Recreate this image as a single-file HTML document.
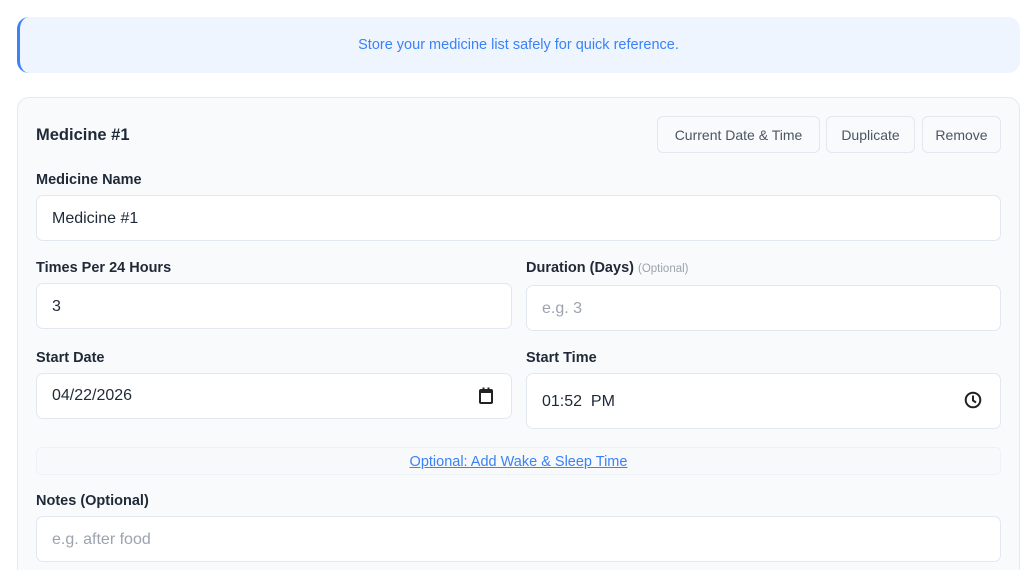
<!DOCTYPE html>
<html><head><meta charset="utf-8"><style>
*{box-sizing:border-box;margin:0;padding:0}
html,body{width:1024px;height:570px;overflow:hidden}
body{background:#fff;font-family:"Liberation Sans","DejaVu Sans",sans-serif;position:relative;color:#1f2937}
.a{position:absolute}
.banner{left:17px;top:17px;width:1003px;height:56px;background:#eef5ff;border-left:3px solid #3b82f6;border-radius:12px;color:#3b82f6;font-size:14.5px;text-align:center;line-height:56px;padding-right:3px}
.card{left:17px;top:97px;width:1003px;height:500px;background:#f8fafc;border:1px solid #e5e9f0;border-radius:12px}
.h{font-size:16.5px;font-weight:bold;color:#1f2937}
.lbl{font-size:14.5px;font-weight:bold;color:#1f2937}
.in{background:#fff;border:1px solid #e2e8f0;border-radius:7px;font-size:16px;color:#1f2937;padding-left:15px;display:flex;align-items:center}
.ph{color:#9ca3af}
.btn{top:116px;height:37px;background:#f8fafc;border:1px solid #e2e8f0;border-radius:6px;font-size:14px;color:#4b5563;display:flex;align-items:center;justify-content:center}
</style></head><body>
<div class="a banner">Store your medicine list safely for quick reference.</div>
<div class="a card"></div>
<div class="a h" style="left:36px;top:126px">Medicine #1</div>
<div class="a btn" style="left:657px;width:163px">Current Date &amp; Time</div>
<div class="a btn" style="left:826px;width:89px">Duplicate</div>
<div class="a btn" style="left:922px;width:79px">Remove</div>
<div class="a lbl" style="left:36px;top:172px">Medicine Name</div>
<div class="a in" style="left:36px;top:195px;width:965px;height:46px;padding-top:2px">Medicine #1</div>
<div class="a lbl" style="left:36px;top:260px">Times Per 24 Hours</div>
<div class="a in" style="left:36px;top:283px;width:476px;height:46px;padding-top:2px">3</div>
<div class="a lbl" style="left:526px;top:260px">Duration (Days) <span style="font-weight:normal;font-size:11.5px;color:#9ca3af">(Optional)</span></div>
<div class="a in" style="left:526px;top:285px;width:475px;height:46px;padding-top:2px"><span class="ph">e.g. 3</span></div>
<div class="a lbl" style="left:36px;top:350px">Start Date</div>
<div class="a in" style="left:36px;top:373px;width:476px;height:46px">04/22/2026
<svg class="a" style="left:441px;top:13px" width="16" height="18" viewBox="0 0 16 18"><rect x="2" y="3" width="12" height="13" rx="1" fill="none" stroke="#222" stroke-width="2"/><rect x="2" y="3" width="12" height="3" fill="#222"/><rect x="4.5" y="0.5" width="2" height="3" fill="#222"/><rect x="9.5" y="0.5" width="2" height="3" fill="#222"/></svg></div>
<div class="a lbl" style="left:526px;top:350px">Start Time</div>
<div class="a in" style="left:526px;top:373px;width:475px;height:56px;padding-top:2px">01:52&nbsp; PM
<svg class="a" style="left:436px;top:16px" width="20" height="20" viewBox="0 0 20 20"><circle cx="10" cy="10" r="7.3" fill="none" stroke="#222" stroke-width="2"/><path d="M10 5.5V10.5L13 12.5" fill="none" stroke="#222" stroke-width="2"/></svg></div>
<div class="a" style="left:36px;top:447px;width:965px;height:28px;border:1px solid #eef1f5;border-radius:5px;background:#f7f9fb;text-align:center;line-height:28px;font-size:14.5px;color:#3b82f6;text-decoration:underline">Optional: Add Wake &amp; Sleep Time</div>
<div class="a lbl" style="left:36px;top:493px">Notes (Optional)</div>
<div class="a in" style="left:36px;top:516px;width:965px;height:46px;padding-top:2px"><span class="ph">e.g. after food</span></div>
</body></html>
